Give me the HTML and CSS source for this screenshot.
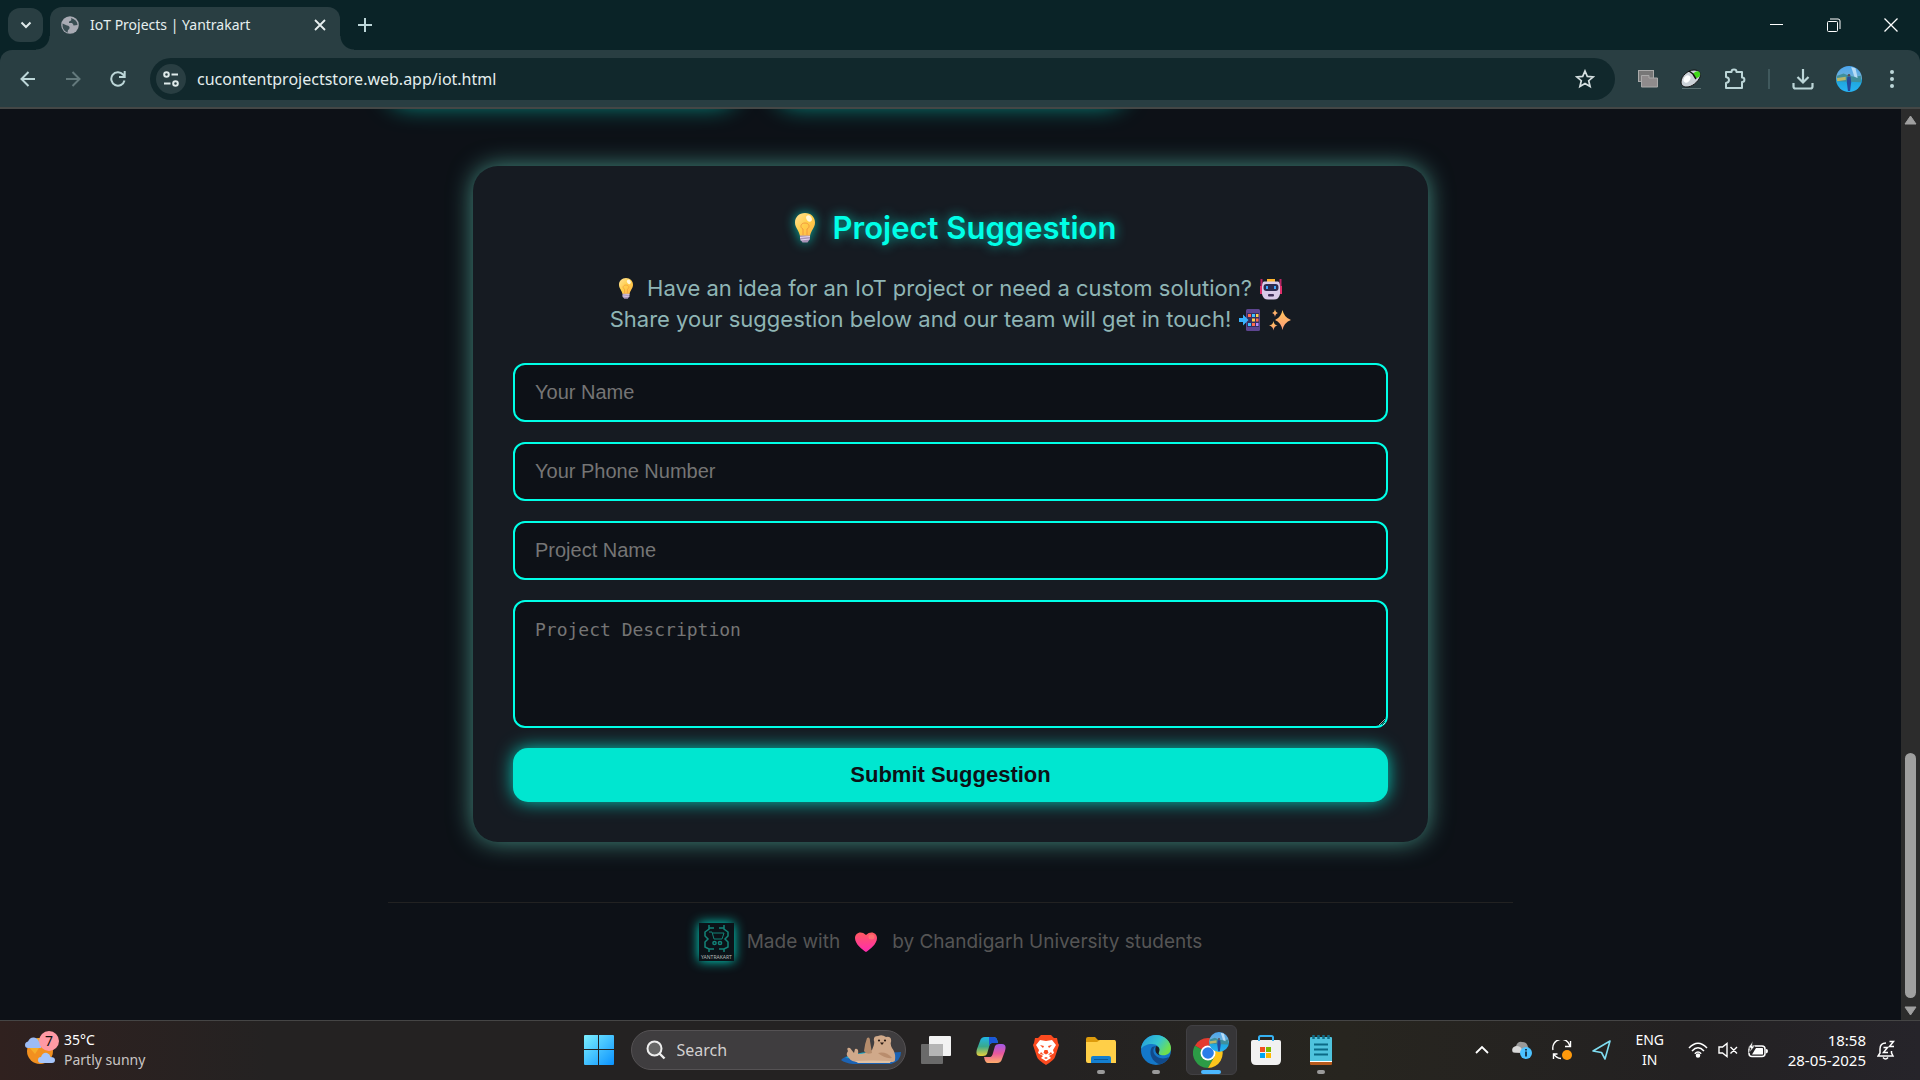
FILE: index.html
```html
<!DOCTYPE html>
<html lang="en">
<head>
<meta charset="utf-8">
<meta name="viewport" content="width=device-width, initial-scale=1">
<title>IoT Projects | Yantrakart</title>
<link rel="stylesheet" href="styles.css">
</head>
<body>
<svg class="defs" width="0" height="0" aria-hidden="true">
  <defs>
    <linearGradient id="gBulb" x1="0" y1="0" x2="1" y2="1"><stop offset="0" stop-color="#ffe29a"/><stop offset=".5" stop-color="#ffce4a"/><stop offset="1" stop-color="#ffb348"/></linearGradient>
    <linearGradient id="gHeart" x1="0" y1="0" x2="0" y2="1"><stop offset="0" stop-color="#ff5a5f"/><stop offset="1" stop-color="#ff2bb0"/></linearGradient>
    <linearGradient id="gStar" x1="0" y1="0" x2="0" y2="1"><stop offset="0" stop-color="#ffc75a"/><stop offset="1" stop-color="#ff9a7a"/></linearGradient>
    <linearGradient id="gWin" x1="0" y1="0" x2="1" y2="1"><stop offset="0" stop-color="#7cf0ff"/><stop offset="1" stop-color="#0a92ff"/></linearGradient>
    <linearGradient id="gPhoto" x1="0" y1="0" x2="0" y2="1"><stop offset="0" stop-color="#4aa6f0"/><stop offset=".45" stop-color="#6fb0d8"/><stop offset=".55" stop-color="#1fa5dc"/><stop offset="1" stop-color="#27b4f5"/></linearGradient>
    <symbol id="bulb" viewBox="0 0 20 30">
      <path d="M10 0C4 0 0 4.200 0 9.500C0 15 4 17 5 23H15C16 17 20 15 20 9.500C20 4.200 16 0 10 0Z" fill="url(#gBulb)"/>
      <path d="M8 22V16C5 15 5 10 10 10S15 15 12 16V22" fill="none" stroke="#f39a3e" stroke-width="1"/>
      <ellipse cx="14" cy="5.500" rx="2.600" ry="3.400" fill="#fff6d8" transform="rotate(-30 14 5.500)"/>
      <path d="M5 22.500H15V26L12.500 29.500H7.500L5 26Z" fill="#a893b8"/>
      <path d="M5 24.500L15 23.500M5.500 27L14.500 26" stroke="#e5d8ee" stroke-width="1"/>
    </symbol>
    <symbol id="photo" viewBox="0 0 24 24">
      <circle cx="12" cy="12" r="12" fill="url(#gPhoto)"/>
      <path d="M1 9L7 7L12 9L17 10L23 9V15L1 14Z" fill="#3f8f9c"/>
      <path d="M14 1L18 2L20 11L17 10Z" fill="#b7dcf5"/>
      <path d="M1 11L9 10L9 13L1 14Z" fill="#b8b66a"/>
      <circle cx="12" cy="8.500" r="1.200" fill="#5b4a52"/>
      <path d="M10.500 10H13.500L14 15L13 23H11L10 15Z" fill="#25489a"/>
    </symbol>
  </defs>
</svg>

<header class="browser">
  <div class="tabstrip">
    <button class="tab-search" type="button" aria-label="Search tabs"><svg width="12" height="8" viewBox="0 0 12 8"><path d="M1.500 1.500L6 6L10.500 1.500" fill="none" stroke="#dfe9ea" stroke-width="2"/></svg></button>
    <div class="tab">
      <svg width="18" height="18" viewBox="0 0 18 18" aria-hidden="true"><circle cx="9" cy="9" r="8.800" fill="#a9abb4"/><path d="M1.500 7.500L6 9.500Q9 10 8.500 12Q8.500 13.500 7 14L6.500 16.800Q1 14.500 1.500 7.500Z" fill="#3a4e53"/><path d="M10 2Q11 4.500 9 5Q7.500 5.500 8 7H11Q12.500 8 12.500 9.500L16.500 9Q16.500 4 10 2Z" fill="#3a4e53"/></svg>
      <span class="tab-title">IoT Projects | Yantrakart</span>
      <button class="plain" type="button" aria-label="Close tab"><svg width="12" height="12" viewBox="0 0 12 12"><path d="M1 1L11 11M11 1L1 11" stroke="#e6efef" stroke-width="1.800"/></svg></button>
    </div>
    <button class="plain new-tab" type="button" aria-label="New tab"><svg width="14" height="14" viewBox="0 0 14 14"><path d="M7 0V14M0 7H14" stroke="#bcd6d8" stroke-width="2"/></svg></button>
    <div class="window-controls">
      <button class="plain" type="button" aria-label="Minimize"><svg width="14" height="14" viewBox="0 0 14 14"><path d="M0 6.500H13" stroke="#fff"/></svg></button>
      <button class="plain" type="button" aria-label="Restore"><svg width="14" height="14" viewBox="0 0 14 14" fill="none" stroke="#fff"><rect x=".5" y="3.500" width="10" height="10" rx="1"/><path d="M3 1H11Q13 1 13 3V11"/></svg></button>
      <button class="plain" type="button" aria-label="Close"><svg width="14" height="14" viewBox="0 0 14 14"><path d="M.5 .5L13.500 13.500M13.500 .5L.5 13.500" stroke="#fff" stroke-width="1.300"/></svg></button>
    </div>
  </div>

  <div class="toolbar">
    <div class="nav">
      <button class="plain" type="button" aria-label="Back"><svg width="16" height="16" viewBox="0 0 16 16" fill="none" stroke="#bcd6d8" stroke-width="2"><path d="M15 8H2M8.500 1L1.500 8L8.500 15"/></svg></button>
      <button class="plain" type="button" aria-label="Forward" disabled><svg width="16" height="16" viewBox="0 0 16 16" fill="none" stroke="#63797c" stroke-width="2"><path d="M1 8H14M7.500 1L14.500 8L7.500 15"/></svg></button>
      <button class="plain" type="button" aria-label="Reload"><svg width="16" height="16" viewBox="0 0 16 16" fill="none" stroke="#bcd6d8" stroke-width="2"><path d="M14.500 9.500A6.700 6.700 0 1 1 13 3.500L14.500 5.500M14.700 0V6H9"/></svg></button>
    </div>
    <div class="omnibox">
      <button class="site-info" type="button" aria-label="View site information"><svg width="16" height="16" viewBox="0 0 16 16" fill="none" stroke="#dfeaea" stroke-width="2"><circle cx="3.500" cy="3.500" r="2.300"/><path d="M8.500 3.500H15M1 12.500H7.500"/><circle cx="12.500" cy="12.500" r="2.300"/></svg></button>
      <input class="address" type="text" aria-label="Address" value="cucontentprojectstore.web.app/iot.html">
      <button class="plain" type="button" aria-label="Bookmark this tab"><svg width="20" height="20" viewBox="0 0 20 20"><path d="M10 2L12.300 7.400L18.200 7.900L13.700 11.700L15.100 17.500L10 14.400L4.900 17.500L6.300 11.700L1.800 7.900L7.700 7.400Z" fill="none" stroke="#d5dfe0" stroke-width="1.700"/></svg></button>
    </div>
    <div class="extensions">
      <button class="plain" type="button" aria-label="Extension"><svg width="20" height="18" viewBox="0 0 20 18" stroke="#aaa" stroke-width="1"><rect x=".5" y=".5" width="15" height="11" fill="#777"/><path d="M3.500 5.500H11V8H19.500V17H3.500Z" fill="#8f8b8c"/></svg></button>
      <button class="plain" type="button" aria-label="Mouse gestures"><svg width="22" height="20" viewBox="0 0 22 20"><path d="M2 19.500H21" stroke="#5b7072"/><path d="M1 13C1 7 8 1 14 1C20 1 21 5 20 8C18 13 12 18 7 18C3 18 1 16 1 13Z" fill="#ccd2d8" stroke="#111" stroke-width="1"/><path d="M13 5C15 2 19 1 20 4C21 7 18 9 16 9Z" fill="#40d818"/><path d="M9 2L13 5L16 10" fill="none" stroke="#111" stroke-width="1.500"/><ellipse cx="7" cy="10" rx="3" ry="4" fill="#fff" transform="rotate(35 7 10)"/></svg></button>
      <button class="plain" type="button" aria-label="Extensions"><svg width="22" height="22" viewBox="0 0 22 22"><path d="M2 4H7.500C7.500 .8 12.500 .8 12.500 4H18V9.500C21.200 9.500 21.200 14 18 14V20H2V15C6 14.500 6 9.500 2 9Z" fill="none" stroke="#bcd6d8" stroke-width="2" stroke-linejoin="round"/></svg></button>
      <span class="divider"></span>
      <button class="plain" type="button" aria-label="Downloads"><svg width="22" height="22" viewBox="0 0 22 22" fill="none" stroke="#bcd6d8" stroke-width="2.200"><path d="M11 1V14M5.500 9L11 14.500L16.500 9M1.500 15V18.500Q1.500 20.500 3.500 20.500H18.500Q20.500 20.500 20.500 18.500V15"/></svg></button>
      <button class="plain" type="button" aria-label="Profile"><svg width="26" height="26"><use href="#photo"/></svg></button>
      <button class="plain" type="button" aria-label="Menu"><svg width="4" height="18" viewBox="0 0 4 18" fill="#bcd6d8"><circle cx="2" cy="2" r="2"/><circle cx="2" cy="9" r="2"/><circle cx="2" cy="16" r="2"/></svg></button>
    </div>
  </div>
</header>

<div class="viewport">
  <main class="page">
    <div class="projects" aria-hidden="true"><div class="project"></div><div class="project"></div></div>

    <section class="suggestion">
      <h2 class="heading"><svg class="heading-bulb" width="20" height="30" role="img" aria-label="Light bulb"><use href="#bulb"/></svg>Project Suggestion</h2>
      <p class="lead">
        <span class="lead-line">
          <svg class="lead-bulb" width="14" height="21" role="img" aria-label="Light bulb"><use href="#bulb"/></svg>
          <span>Have an idea for an IoT project or need a custom solution?</span>
          <svg width="22" height="22" viewBox="0 0 22 22" role="img" aria-label="Robot"><path d="M1.500 1V16M20.500 1V16" stroke="#b82565" stroke-width="2"/><path d="M0 8H3V16H0ZM19 8H22V16H19Z" fill="#e0306c"/><path d="M7 1H15V5H7Z" fill="#ffb62e"/><path d="M4 3.500H18Q20 4 20 9V16Q19 21.500 14 21.500H8Q3 21.500 2 16V9Q2 4 4 3.500Z" fill="#d9cbe9"/><rect x="3.500" y="6" width="15" height="7" rx="3" fill="#2c2a4e"/><path d="M7 8V11M15 8V11" stroke="#3ba5ff" stroke-width="2"/><rect x="8" y="16" width="6" height="2.500" rx="1" fill="#3f2f59"/></svg>
        </span>
        <span class="lead-line">
          <span>Share your suggestion below and our team will get in touch!</span>
          <svg width="22" height="22" viewBox="0 0 22 22" role="img" aria-label="Phone with incoming arrow"><rect x="7" y="0" width="14" height="22" rx="1.500" fill="#5d4590"/><rect x="8" y="4" width="12" height="14" fill="#34305f"/><path d="M9 5H12V8H9Z" fill="#ff6a4d"/><path d="M13 5H16V8H13ZM9 14H12V17H9Z" fill="#3fc0ff"/><path d="M17 5H19.500V8H17ZM13 9.500H16V12.500H13Z" fill="#ffd04a"/><path d="M17 9.500H19.500V12.500H17ZM13 14H16V17H13Z" fill="#ff6a4d"/><path d="M17 14H19.500V17H17Z" fill="#b78cff"/><path d="M0 9H4V5.500L9.500 11L4 16.500V13H0Z" fill="#38b2ff"/></svg>
          <svg width="22" height="22" viewBox="0 0 22 22" role="img" aria-label="Sparkles" fill="url(#gStar)"><path d="M13.500 1Q15 8.500 22 11Q15 13.500 13.500 21Q12 13.500 6 11Q12 8.500 13.500 1Z"/><path d="M6 0Q6.500 3.500 9 4Q6.500 4.500 6 8Q5.500 4.500 3 4Q5.500 3.500 6 0Z"/><path d="M4.500 12Q5 16 8.500 16.500Q5 17 4.500 21.500Q4 17 0 16.500Q4 16 4.500 12Z"/></svg>
        </span>
      </p>
      <form class="form">
        <input class="field" type="text" placeholder="Your Name" aria-label="Your Name">
        <input class="field" type="tel" placeholder="Your Phone Number" aria-label="Your Phone Number">
        <input class="field" type="text" placeholder="Project Name" aria-label="Project Name">
        <textarea class="field description" placeholder="Project Description" aria-label="Project Description"></textarea>
        <button class="submit" type="button">Submit Suggestion</button>
      </form>
    </section>

    <footer class="credits">
      <svg class="brand" width="35" height="38" viewBox="0 0 35 38" role="img" aria-label="Yantrakart">
        <rect width="35" height="38" fill="#0b1218"/>
        <g fill="none" stroke="#138277" stroke-width="1.500"><path d="M10 2V6L6 9V13L9 16L6 19V24L10 26V29M25 2V6L29 9V13L26 16L29 19V24L25 26V29M10 5H15M25 5H20M10 26H15M25 26H20"/><path d="M10 9H13L15 16H23L25 10H14" stroke-width="1"/><circle cx="15.500" cy="20" r="1.600"/><circle cx="21" cy="20" r="1.600"/></g>
        <text x="17.500" y="36" text-anchor="middle" class="brand-text">YANTRAKART</text>
      </svg>
      <span class="made">Made with</span>
      <svg width="22" height="20" viewBox="0 0 22 20" role="img" aria-label="Heart"><path d="M11 20C7 17.500 0 12 0 6C0 1 6-2 11 3C16-2 22 1 22 6C22 12 15 17.500 11 20Z" fill="url(#gHeart)"/><ellipse cx="16.500" cy="5" rx="3" ry="2.500" fill="#ff8c72" opacity=".5"/></svg>
      <span class="by">by Chandigarh University students</span>
    </footer>
  </main>
  <div class="scrollbar" aria-hidden="true">
    <svg width="13" height="10" viewBox="0 0 13 10"><path d="M6.500 1L12 9H1Z" fill="#a0a0a0" stroke="#a0a0a0" stroke-linejoin="round"/></svg>
    <div class="track"><div class="thumb"></div></div>
    <svg width="13" height="10" viewBox="0 0 13 10"><path d="M6.500 9L12 1H1Z" fill="#a0a0a0" stroke="#a0a0a0" stroke-linejoin="round"/></svg>
  </div>
</div>

<footer class="taskbar">
  <button class="weather" type="button">
    <svg width="34" height="36" viewBox="0 0 34 36" aria-hidden="true">
      <circle cx="15" cy="21" r="13" fill="#f2901f"/><path d="M3 16A13 13 0 0 1 20 9L10 24Z" fill="#f6ad2a"/>
      <path d="M3 18Q0 18 0 15Q0 12 3 11.500Q5 7 9 7.500Q13 8 14 12Q17 13 16 18Z" fill="#9cbcf6"/>
      <path d="M16 33Q13 33 13 30Q13 27 16 27Q18 22 22 23Q25 24 25.500 27Q30 27 30 30Q30 33 27 33Z" fill="#a7c6fb"/>
      <circle cx="24" cy="11" r="10" fill="#ff99a4"/><text x="24" y="16" text-anchor="middle" class="badge-text">7</text>
    </svg>
    <span class="weather-text"><span>35°C</span><span class="muted">Partly sunny</span></span>
  </button>

  <div class="apps">
    <button class="app" type="button" aria-label="Start"><svg width="30" height="30" viewBox="0 0 30 30" fill="url(#gWin)"><path d="M0 1Q0 0 1 0H14V14H0ZM15 0H29Q30 0 30 1V14H15ZM0 15H14V30H1Q0 30 0 29ZM15 15H30V29Q30 30 29 30H15Z"/></svg></button>
    <div class="search">
      <svg width="20" height="20" viewBox="0 0 20 20" aria-hidden="true"><circle cx="8.500" cy="8.500" r="7" fill="#666" stroke="#eee" stroke-width="2"/><path d="M13.500 13.500L18.500 18.500" stroke="#eee" stroke-width="2.400"/></svg>
      <input type="search" class="search-input" placeholder="Search" aria-label="Search">
      <svg width="60" height="30" viewBox="0 0 60 30" aria-hidden="true">
        <path d="M0 25Q4 21 10 20L60 17Q60 26 50 29H12Q4 28 0 25Z" fill="#1c63b4"/><path d="M4 23Q20 15 36 18L20 24Z" fill="#18a7c8"/>
        <path d="M7 16Q5 12 9 13L13 18L14 14Q18 13 17 19Q25 19 31 15Q34 8 33 6Q32 1 37 1Q41-1 45 2Q51 1 50 7Q49 9 51 13Q55 18 54 25Q54 27 50 27H18Q10 27 8 23Q4 20 7 16Z" fill="#d0a98a"/>
        <path d="M23 16Q24 8 26 3Q29 1 29 6L31 18Q25 20 23 16Z" fill="#b58c6c"/><path d="M37 18Q45 16 51 23Q44 24 37 18Z" fill="#b98d6d"/><path d="M14 26Q30 25 50 26L49 28H17Z" fill="#e0c2a6"/>
        <circle cx="38" cy="5.500" r="1.100" fill="#2a1b14"/><circle cx="44" cy="5.500" r="1.100" fill="#2a1b14"/><path d="M39 7.500H43L41 10Z" fill="#2a1b14"/>
      </svg>
    </div>
    <button class="app" type="button" aria-label="Task view"><svg width="30" height="28" viewBox="0 0 30 28"><rect x="8" y="0" width="22" height="20" rx="1" fill="#f2f2f2"/><rect x="0" y="8" width="22" height="20" rx="1" fill="#777" opacity=".85"/><path d="M8 8H22V20H8Z" fill="#b5b5b5"/></svg></button>
    <button class="app" type="button" aria-label="Copilot"><svg width="30" height="28" viewBox="0 0 30 28">
      <defs><linearGradient id="gCo1" x1="0" y1="0" x2="0" y2="1"><stop offset="0" stop-color="#1fb6e8"/><stop offset=".5" stop-color="#3aa98c"/><stop offset="1" stop-color="#e9cf3c"/></linearGradient><linearGradient id="gCo2" x1="0" y1="0" x2="0" y2="1"><stop offset="0" stop-color="#a259e8"/><stop offset=".5" stop-color="#e8589c"/><stop offset="1" stop-color="#ffae6b"/></linearGradient></defs>
      <path d="M9 1H18Q21 1 22 7H16Q14 7 13 11L11 18Q10 20 7 20H4Q-1 20 1 13L4 5Q5 1 9 1Z" fill="url(#gCo1)"/><path d="M13 1H18Q21 1 22 7H16Q14 7 13 10Z" fill="#1b57d8"/>
      <path d="M21 27H12Q9 27 8 21H14Q16 21 17 17L19 10Q20 8 23 8H26Q31 8 29 15L26 23Q25 27 21 27Z" fill="url(#gCo2)"/></svg></button>
    <button class="app" type="button" aria-label="Brave"><svg width="26" height="30" viewBox="0 0 26 30"><path d="M8 0H18L21 3L24 3L25 8L26 10L22 22Q21 25 13 30Q5 25 4 22L0 10L1 8L2 3L5 3Z" fill="#fb4a1f"/><path d="M7 5L13 6L19 5L23 10L20 15L21 18L16 21L18 23L13 26L8 23L10 21L5 18L6 15L3 10Z" fill="#fff"/><path d="M7 10L11 11L10 13ZM19 10L15 11L16 13ZM11.500 15H14.500L15.500 18L13 19.500L10.500 18ZM8 17L11 20L7 19ZM18 17L15 20L19 19ZM11 23L13 22L15 23L13 24Z" fill="#fb4a1f"/></svg></button>
    <button class="app" type="button" aria-label="File Explorer"><svg width="30" height="26" viewBox="0 0 30 26"><path d="M0 2Q0 0 2 0H9L12 3H29V10H0Z" fill="#dd9b0c"/><path d="M0 5H11L14 3H28Q30 3 30 5V26H2Q0 26 0 24Z" fill="#ffcf48"/><path d="M5 26V21Q5 19 7 19H23Q25 19 25 21V26Z" fill="#147fd0"/><path d="M8 22.500H22" stroke="#0b5899"/></svg><i class="running"></i></button>
    <button class="app" type="button" aria-label="Edge"><svg width="30" height="30" viewBox="0 0 30 30">
      <defs><linearGradient id="gEd" x1="0" y1="0" x2="1" y2=".5"><stop offset="0" stop-color="#2398df"/><stop offset=".6" stop-color="#35c6cf"/><stop offset="1" stop-color="#6fe04e"/></linearGradient></defs>
      <circle cx="15" cy="15" r="15" fill="#1478c9"/><path d="M0 14C1 5 8 0 15 0C24 0 30 7 30 13C30 19 25 21 20 20C17 19.500 17 18 18 16C19 12 16 9 11 9C6 9 2 11 0 14Z" fill="url(#gEd)"/><path d="M11 12C7 18 11 27 19 29.500C24 28 27 25 28 22C22 25 14 23 12.500 17C12 15 12.500 13 15 11Z" fill="#114a8b"/><path d="M15 11C19 12 19 15 18 17C17 19 18 20 20 20.500C16 20 13 17 15 11Z" fill="#1d1e22"/></svg><i class="running"></i></button>
    <button class="app active" type="button" aria-label="Chrome"><svg width="36" height="36" viewBox="0 0 36 36">
      <path d="M15 21L2 13.500A15 15 0 0 0 15 36L22 24Z" fill="#2c9c46"/><path d="M15 21L2 13.500A15 15 0 0 1 28 13.500H15Z" fill="#e33b2e"/><path d="M15 14H28A15 15 0 0 1 15 36L21.500 24.500Z" fill="#fbc51c"/><circle cx="15" cy="21" r="7.500" fill="#fff"/><circle cx="15" cy="21" r="5.800" fill="#2b7de9"/><svg x="16" y="0" width="20" height="20"><use href="#photo"/></svg></svg><i class="running current"></i></button>
    <button class="app" type="button" aria-label="Microsoft Store"><svg width="30" height="30" viewBox="0 0 30 30"><path d="M8 8V2.500Q8 1 9.500 1H20.500Q22 1 22 2.500V8" fill="none" stroke="#35b1f1" stroke-width="2"/><path d="M0 7Q0 5 2 5H28Q30 5 30 7V25Q30 30 25 30H5Q0 30 0 25Z" fill="#f1f1f1"/><path d="M8 2V6M22 2V6" stroke="#35b1f1" stroke-width="2"/><path d="M9 12H14V17H9Z" fill="#f25022"/><path d="M15 12H20V17H15Z" fill="#7fba00"/><path d="M9 18H14V23H9Z" fill="#00a4ef"/><path d="M15 18H20V23H15Z" fill="#ffb900"/></svg></button>
    <button class="app" type="button" aria-label="Notepad"><svg width="22" height="30" viewBox="0 0 22 30"><path d="M0 25H22V29Q22 30 21 30H1Q0 30 0 29Z" fill="#b65a1c"/><path d="M0 3H22V27H0Z" fill="#fff"/><path d="M0 3Q0 2 1 2H21Q22 2 22 3V26H0Z" fill="#4fc3dd"/><path d="M4 9.500H18M4 14.500H18M4 19.500H18" stroke="#0b6a86" stroke-width="2"/><path d="M3.500 0V4M8.500 0V4M13.500 0V4M18.500 0V4" stroke="#126d88" stroke-width="2.500"/></svg><i class="running"></i></button>
  </div>

  <div class="tray">
    <button class="plain" type="button" aria-label="Show hidden icons"><svg width="14" height="10" viewBox="0 0 14 10"><path d="M1 8L7 2L13 8" fill="none" stroke="#fff" stroke-width="1.800"/></svg></button>
    <svg width="20" height="18" viewBox="0 0 20 18" role="img" aria-label="OneDrive"><path d="M3 12Q0 12 0 9Q0 6 4 5Q6 0 10 1Q15 1 16 6Q18 8 16 12Z" fill="#999"/><path d="M1 11Q-1 6 5 5Q10 5 11 12Z" fill="#d8d8d8"/><circle cx="14" cy="12" r="6" fill="#4cc2ff"/><path d="M14 10.500V15.500M14 8V9.500" stroke="#123" stroke-width="1.700"/></svg>
    <svg width="20" height="20" viewBox="0 0 20 20" role="img" aria-label="Updates"><path d="M1 10A8.500 8.500 0 0 1 18 6M18.500 1V6.500H13M5.500 14H1.500V19M2 14Q4 18 9 18.500" fill="none" stroke="#fff" stroke-width="1.400"/><circle cx="15" cy="15" r="5" fill="#ff9a0c"/></svg>
    <svg width="20" height="20" viewBox="0 0 20 20" role="img" aria-label="Location"><path d="M18 1L13 19L9.500 12.500L1 11Z" fill="none" stroke="#7fdcf0" stroke-width="1.600" stroke-linejoin="round"/></svg>
    <button class="language" type="button"><span>ENG</span><span>IN</span></button>
    <button class="status" type="button" aria-label="Network, volume, battery">
      <svg width="20" height="16" viewBox="0 0 20 16" fill="none" stroke="#fff" stroke-width="1.500"><path d="M1 6Q10-3.500 19 6M4 9Q10 2.500 16 9M6.800 11.700Q10 8.500 13.200 11.700"/><circle cx="10" cy="13.500" r="1.500" fill="#fff"/></svg>
      <svg width="20" height="16" viewBox="0 0 20 16" fill="none" stroke="#fff" stroke-width="1.400"><path d="M1 5H4.500L9 1.500V14.500L4.500 11H1ZM12.500 5L19 11.500M19 5L12.500 11.500"/></svg>
      <svg width="20" height="17" viewBox="0 0 20 17"><rect x="1" y="5" width="16" height="10.500" rx="3" fill="none" stroke="#fff" stroke-width="1.500"/><path d="M8 7H14.500Q15 7 15 7.500V13Q15 13.500 14.500 13.500H4Z" fill="#fff"/><path d="M18 8Q20 8 20 10T18 12.500Z" fill="#fff"/><path d="M5 0L0 7H3L1 12L7 5H4Z" fill="#fff" stroke="#242424" stroke-width=".6"/></svg>
    </button>
    <button class="clock" type="button"><span>18:58</span><span>28-05-2025</span></button>
    <svg width="18" height="20" viewBox="0 0 18 20" role="img" aria-label="Notifications snoozed" fill="none" stroke="#fff" stroke-width="1.500"><path d="M9 3Q3 3 3 9V13L1 16H16L14.500 13V11M6 17.500Q8.500 20.500 11 17.500M6.500 7.500H10.500L6.500 12.500H11M12.500 1.500H16.500L12.500 6.500H17"/></svg>
  </div>
</footer>
</body>
</html>
```
FILE: styles.css
```css
* { box-sizing: border-box; }

body {
  margin: 0;
  height: 100vh;
  display: flex;
  flex-direction: column;
  overflow: hidden;
  background: #0d1117;
  font-family: "Noto Sans", "Open Sans", sans-serif;
}

svg { display: block; flex: none; }
.defs { position: absolute; }

button { font: inherit; color: inherit; border: 0; padding: 0; margin: 0; background: none; }
.plain { display: grid; place-items: center; }

/* Browser frame */
.browser { background: #0a2327; flex: none; }

.tabstrip { display: flex; align-items: center; height: 50px; padding-left: 8px; }

.tab-search {
  display: grid;
  place-items: center;
  width: 35px;
  height: 34px;
  border-radius: 12px;
  background: #293e42;
}

.tab {
  position: relative;
  display: flex;
  align-items: center;
  gap: 11px;
  align-self: flex-end;
  width: 290px;
  height: 43px;
  margin-left: 7px;
  padding: 0 14px 7px 11px;
  border-radius: 12px 12px 0 0;
  background: #293e42;
}
.tab::before,
.tab::after {
  content: "";
  position: absolute;
  bottom: 0;
  width: 14px;
  height: 14px;
}
.tab::before { right: 100%; background: radial-gradient(circle at 0 0, transparent 13px, #293e42 14px); }
.tab::after { left: 100%; background: radial-gradient(circle at 100% 0, transparent 13px, #293e42 14px); }
.tab-title { flex: 1; font-size: 14px; line-height: 20px; color: #e6efef; white-space: nowrap; }

.new-tab { width: 30px; height: 30px; margin-left: 10px; }
.window-controls { display: flex; margin: 0 1px 0 auto; }
.window-controls .plain { width: 57px; height: 48px; }

.toolbar {
  display: flex;
  align-items: center;
  height: 59px;
  background: #293e42;
  border-bottom: 2px solid #444746;
  border-radius: 12px 12px 0 0;
}
.nav { display: flex; padding: 0 10px 0 5px; }
.nav .plain { width: 45px; height: 40px; }

.omnibox {
  display: flex;
  align-items: center;
  flex: 1;
  height: 42px;
  padding: 0 20px 0 6px;
  margin-right: 23px;
  border-radius: 21px;
  background: #11282c;
}
.site-info {
  display: grid;
  place-items: center;
  width: 30px;
  height: 30px;
  border-radius: 50%;
  background: #293e42;
}
.address {
  flex: 1;
  min-width: 0;
  margin-left: 11px;
  padding: 0;
  border: 0;
  outline: 0;
  background: none;
  color: #e4eeee;
  font: 16px/24px "Noto Sans", sans-serif;
}
.extensions { display: flex; align-items: center; gap: 22px; padding-right: 26px; }
.extensions .plain:nth-last-child(2) { margin-right: 6px; }
.divider { width: 2px; height: 20px; background: #40595d; }

/* Page */
.viewport { display: flex; flex: 1; min-height: 0; }
.page { flex: 1; min-width: 0; overflow: hidden; display: flex; flex-direction: column; align-items: center; }

.projects {
  display: grid;
  grid-template-columns: repeat(3, 1fr);
  gap: 40px;
  width: 100%;
  max-width: 1125px;
  height: 40px;
  margin-top: -44px;
}
.project { border-radius: 20px; box-shadow: 0 0 25px rgba(0, 255, 231, 0.6); }

.suggestion {
  width: 100%;
  max-width: 955px;
  margin-top: 61px;
  padding: 40px;
  border-radius: 25px;
  background: #161b22;
  box-shadow: 0 0 25px rgba(120, 255, 228, 0.52);
  text-align: center;
}
.heading {
  display: flex;
  align-items: center;
  justify-content: center;
  margin: 0 0 23px;
  font: 600 31px/44px Inter, sans-serif;
  color: #00ffe7;
  text-shadow: 0 0 12px #00ffe7aa;
}
.heading-bulb { margin: 0 18px 0 10px; filter: drop-shadow(0 0 6px #00ffe7aa); }
.lead { margin: 0 0 28px; font: 22px/31px Inter, sans-serif; color: #8fb5b5; }
.lead-line { display: flex; align-items: center; justify-content: center; gap: 8px; white-space: nowrap; }
.lead-bulb { margin-right: 6px; }

.form { display: flex; flex-direction: column; gap: 20px; }
.field {
  width: 100%;
  height: 59px;
  margin: 0;
  padding: 16px 20px;
  border: 2px solid #00ffe7;
  border-radius: 12px;
  outline: 0;
  background: #0d1117;
  color: #e6edf3;
  font: 20px/24px "Liberation Sans", Arial, sans-serif;
}
.field::placeholder { color: #757575; }
.description { height: 128px; resize: vertical; font: 18px/24px "DejaVu Sans Mono", monospace; }
.submit {
  height: 54px;
  border-radius: 15px;
  background: #00e6d0;
  color: #0d1117;
  font: bold 22px/26px "Liberation Sans", Arial, sans-serif;
  box-shadow: 0 0 18px rgba(0, 255, 231, 0.75);
}

.credits {
  display: flex;
  align-items: center;
  justify-content: center;
  width: 100%;
  max-width: 1125px;
  margin-top: 60px;
  padding-top: 20px;
  border-top: 1px solid #222;
  font: 19px/28px Inter, sans-serif;
  color: #555;
  white-space: nowrap;
}
.brand { margin-right: 13px; box-shadow: 0 0 12px #00e6d0; }
.brand-text { font: 5px "Noto Sans", sans-serif; fill: #b7bcbc; }
.made { margin-right: 15px; }
.by { margin-left: 15px; }

.scrollbar {
  display: flex;
  flex-direction: column;
  align-items: center;
  width: 19px;
  padding: 6px 0 4px;
  background: #2c2c2c;
}
.track { display: flex; flex: 1; align-items: flex-end; padding: 8px 0; }
.thumb { width: 11px; height: 245px; border-radius: 6px; background: #9f9f9f; }

/* Taskbar */
.taskbar {
  display: grid;
  grid-template-columns: 1fr auto 1fr;
  align-items: center;
  flex: none;
  height: 60px;
  padding-bottom: 2px;
  border-top: 1px solid #454545;
  background: linear-gradient(90deg, #30211f, #242222 14%, #242222 55%, #27251f 70%, #232122 88%, #26242a);
  color: #fff;
  font-size: 14px;
  line-height: 20px;
}
.weather { display: flex; gap: 5px; padding-left: 25px; text-align: left; }
.weather-text { display: flex; flex-direction: column; }
.badge-text { font-size: 14px; fill: #111; }
.muted { color: #c9c5c4; }

.apps { display: flex; align-items: center; }
.app { position: relative; display: grid; place-items: center; width: 55px; height: 50px; }
.active::before {
  content: "";
  position: absolute;
  inset: 0 2px;
  z-index: -1;
  border: 1px solid #414043;
  border-radius: 6px;
  background: #363537;
}
.active { isolation: isolate; }
.running {
  position: absolute;
  bottom: 1px;
  left: 50%;
  width: 8px;
  height: 4px;
  border-radius: 2px;
  background: #9a9a9a;
  transform: translateX(-50%);
}
.current { width: 20px; background: #4cb8ff; }

.search {
  display: flex;
  align-items: center;
  width: 275px;
  height: 40px;
  margin: 0 3px 0 4px;
  padding: 0 4px 0 14px;
  border: 1px solid #555254;
  border-radius: 20px;
  background: #3f3d3f;
}
.search-input {
  flex: 1;
  min-width: 0;
  margin-left: 9px;
  border: 0;
  outline: 0;
  background: none;
  color: #fff;
  font: 16px/24px "Noto Sans", sans-serif;
}
.search-input::placeholder { color: #d2d0d0; }

.tray { display: flex; align-items: center; justify-content: flex-end; gap: 20px; padding-right: 25px; }
.tray > .plain { margin-right: 3px; }
.language { display: flex; flex-direction: column; align-items: center; width: 36px; }
.status { display: flex; align-items: center; gap: 10px; }
.clock { display: flex; flex-direction: column; text-align: right; margin-right: -9px; font-size: 15px; }
```
